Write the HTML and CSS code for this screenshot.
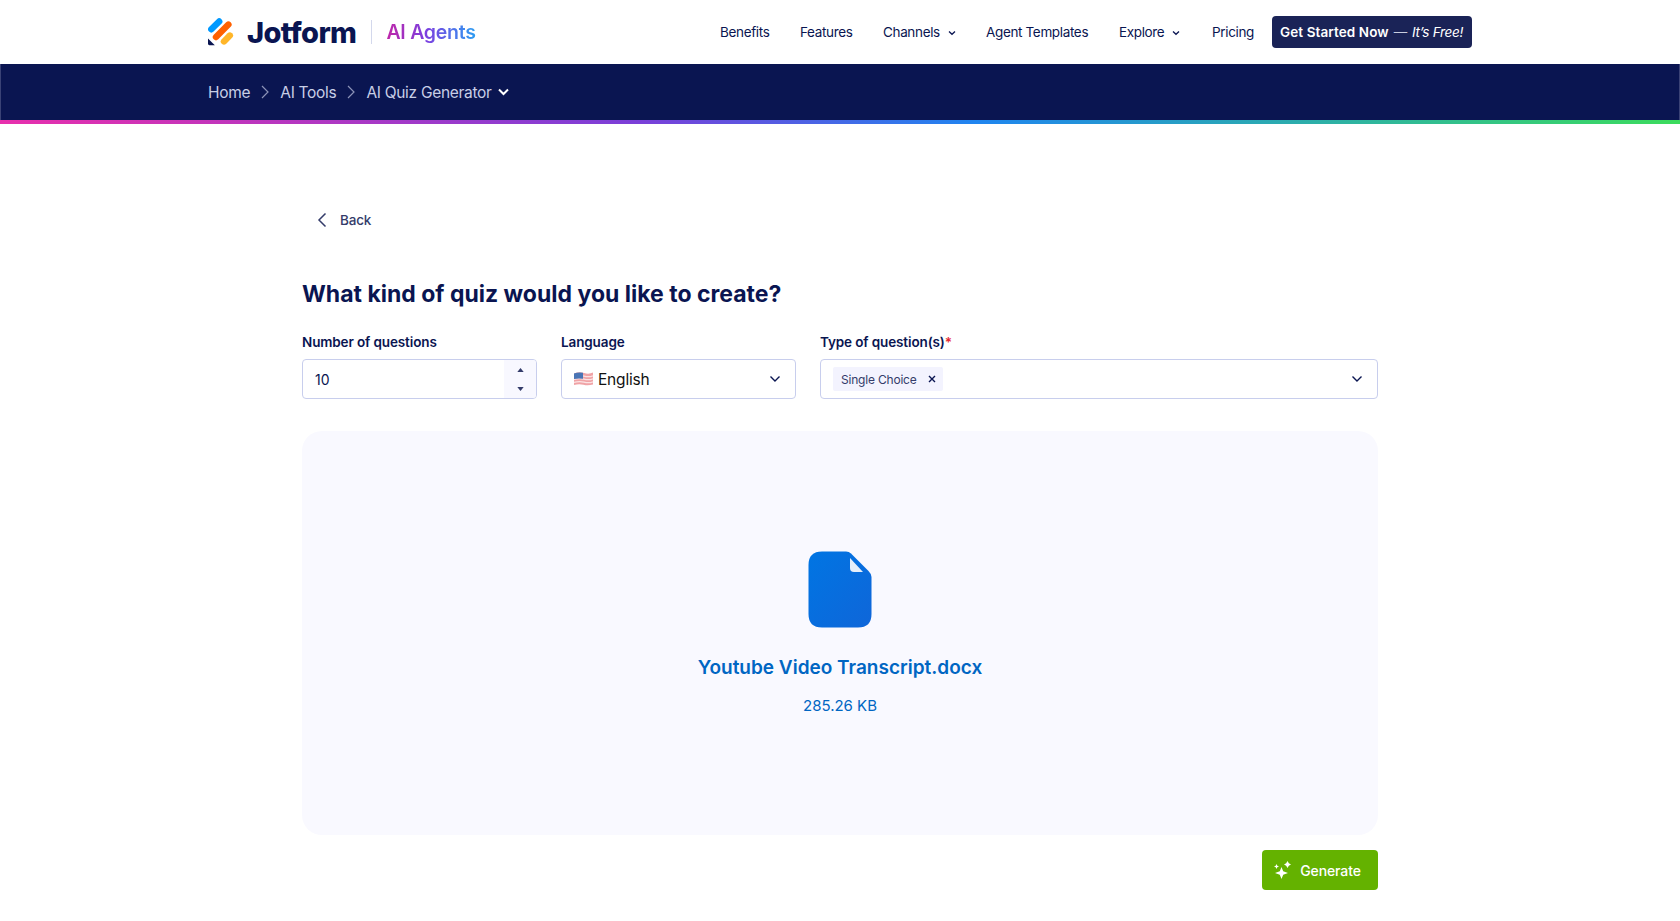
FILE: index.html
```html
<!DOCTYPE html>
<html lang="en">
<head>
<meta charset="utf-8">
<title>AI Quiz Generator</title>
<link rel="stylesheet" href="styles.css">
</head>
<body>
<header class="topbar">
  <div class="wrap topbar-inner">
    <a class="brand">
      <svg class="logo" width="26" height="28" viewBox="0 0 26 28">
        <path d="M3.300 11.300 11.200 3.400" stroke="#0099ff" stroke-width="6.400" stroke-linecap="round"/>
        <path d="M8 19 20.400 6.600" stroke="#ff6100" stroke-width="6.400" stroke-linecap="round"/>
        <path d="M16 23.400 21.800 17.600" stroke="#ffb629" stroke-width="6.400" stroke-linecap="round"/>
        <path d="M0 20.500 6.800 27.200H1.400Q0 27.200 0 25.800Z" fill="#0a1551"/>
      </svg>
      <span class="brand-name">Jotform</span>
      <span class="brand-sep"></span>
      <span class="brand-sub">AI Agents</span>
    </a>
    <nav class="nav">
      <a class="nav-link">Benefits</a>
      <a class="nav-link">Features</a>
      <a class="nav-link">Channels<svg class="nav-caret" width="8" height="6" viewBox="0 0 8 6"><path d="M1 1.500 4 4.300 7 1.500" fill="none" stroke="#0a1551" stroke-width="1.300"/></svg></a>
      <a class="nav-link">Agent Templates</a>
      <a class="nav-link">Explore<svg class="nav-caret" width="8" height="6" viewBox="0 0 8 6"><path d="M1 1.500 4 4.300 7 1.500" fill="none" stroke="#0a1551" stroke-width="1.300"/></svg></a>
      <a class="nav-link nav-last">Pricing</a>
      <a class="cta"><b>Get Started Now</b><span class="cta-dash">—</span><i>It’s Free!</i></a>
    </nav>
  </div>
</header>
<div class="crumbs">
  <div class="wrap crumbs-inner">
    <a>Home</a>
    <svg class="crumb-sep" width="8" height="14" viewBox="0 0 8 14"><path d="M1 1 7 7 1 13" fill="none" stroke="#8c93b8" stroke-width="1.200"/></svg>
    <a>AI Tools</a>
    <svg class="crumb-sep" width="8" height="14" viewBox="0 0 8 14"><path d="M1 1 7 7 1 13" fill="none" stroke="#8c93b8" stroke-width="1.200"/></svg>
    <a>AI Quiz Generator</a>
    <svg class="crumb-caret" width="11" height="8" viewBox="0 0 11 8"><path d="M1 1.500 5.500 6 10 1.500" fill="none" stroke="#fff" stroke-width="2"/></svg>
  </div>
</div>
<div class="rainbow"></div>
<main class="main">
  <a class="back">
    <svg width="10" height="16" viewBox="0 0 10 16"><path d="M8.500 1.500 2 8l6.500 6.500" fill="none" stroke="#343c6a" stroke-width="1.500"/></svg>
    <span>Back</span>
  </a>
  <h1 class="title">What kind of quiz would you like to create?</h1>
  <div class="fields">
    <div class="field">
      <label class="label">Number of questions</label>
      <div class="box number">
        <span class="number-val">10</span>
        <span class="stepper">
          <svg width="7" height="4" viewBox="0 0 8 5"><path d="M4 0 8 5H0Z" fill="#343c6a"/></svg>
          <svg width="7" height="4" viewBox="0 0 8 5"><path d="M4 5 8 0H0Z" fill="#343c6a"/></svg>
        </span>
      </div>
    </div>
    <div class="field">
      <label class="label">Language</label>
      <div class="box select">
        <svg class="flag" width="19" height="14" viewBox="0 0 19 14">
          <path d="M0 1.500Q5 -.500 10 1T19 .500V12.500Q14 14 9.500 12.800T0 13Z" fill="#f0a3a6"/>
          <path d="M0 4.500Q5 3 10 4.200T19 3.800M0 7.500Q5 6 10 7.200T19 6.800M0 10.500Q5 9 10 10.200T19 9.800" fill="none" stroke="#fbe3e4" stroke-width="1.200"/>
          <path d="M0 1.500Q4.500 -.200 9 .800V6.800Q4.500 6 0 7Z" fill="#4a75b5"/>
        </svg>
        <span class="select-val">English</span>
        <svg class="chev" width="12" height="8" viewBox="0 0 12 8"><path d="M1.500 1.500 6 6l4.500-4.500" fill="none" stroke="#0a1551" stroke-width="1.400"/></svg>
      </div>
    </div>
    <div class="field field-wide">
      <label class="label">Type of question(s)<span class="req">*</span></label>
      <div class="box select">
        <span class="tag">Single Choice
          <svg width="8" height="8" viewBox="0 0 8 8"><path d="M1 1l6 6M7 1 1 7" stroke="#0a1551" stroke-width="1.400"/></svg>
        </span>
        <svg class="chev" width="12" height="8" viewBox="0 0 12 8"><path d="M1.500 1.500 6 6l4.500-4.500" fill="none" stroke="#0a1551" stroke-width="1.400"/></svg>
      </div>
    </div>
  </div>
  <section class="panel">
    <svg class="doc" width="64" height="77" viewBox="0 0 64 77">
      <defs><linearGradient id="docg" x1="0" y1="0" x2="1" y2="1"><stop offset="0" stop-color="#0075e3"/><stop offset="1" stop-color="#0f66d9"/></linearGradient></defs>
      <path d="M14 .500H38Q41 .500 43 2.500L60.500 20Q63.500 23 63.500 26V63Q63.500 76.500 50 76.500H14Q.500 76.500 .500 63V14Q.500 .500 14 .500Z" fill="url(#docg)"/>
      <path d="M42 7 55 21H46Q42 21 42 17Z" fill="#e6effa"/>
    </svg>
    <div class="file-name">Youtube Video Transcript.docx</div>
    <div class="file-size">285.26 KB</div>
  </section>
  <div class="actions">
    <button class="generate">
      <svg width="18" height="18" viewBox="0 0 18 18" fill="#fff">
        <path d="M7.500 6 9.200 10.300 14 12 9.200 13.700 7.500 18 5.800 13.700 1 12 5.800 10.300Z"/>
        <path d="M13.500 0 14.800 2.200 17 3.500 14.800 4.800 13.500 7 12.200 4.800 10 3.500 12.200 2.200Z"/>
        <path d="M2.500 3 3.300 4.700 5 5.500 3.300 6.300 2.500 8 1.700 6.300 0 5.500 1.700 4.700Z"/>
      </svg>
      Generate
    </button>
  </div>
</main>
</body>
</html>
```
FILE: styles.css
```css
* { box-sizing: border-box; }
html, body { margin: 0; height: 100%; }
body { background: #fff; color: #0a1551; font-family: Inter, "Liberation Sans", sans-serif; overflow: hidden; }
.wrap { width: 1264px; margin: 0 auto; }
.topbar { height: 64px; background: #fff; }
.topbar-inner { height: 64px; display: flex; align-items: center; justify-content: space-between; }
.brand { display: flex; align-items: center; }
.logo { display: block; margin-right: 13px; }
.brand-name { font-size: 29px; font-weight: 800; letter-spacing: -0.6px; color: #0a1551; }
.brand-sep { width: 1px; height: 24px; background: #d3d8ec; margin: 0 14px 0 15px; }
.brand-sub { font-size: 19.500px; font-weight: 600; letter-spacing: -0.25px; background: linear-gradient(90deg, #c026a8, #7b3fe0 45%, #2b9df2); -webkit-background-clip: text; background-clip: text; color: transparent; }
.nav { display: flex; align-items: center; }
.nav-link { font-size: 13.500px; letter-spacing: -0.35px; width: 80px; color: #0a1551; white-space: nowrap; }
.nav-link:nth-child(2) { width: 83px; }
.nav-link:nth-child(3) { width: 103px; }
.nav-link:nth-child(4) { width: 133px; }
.nav-link:nth-child(5) { width: 93px; }
.nav-last { width: 60px; }
.nav-caret { margin-left: 8px; vertical-align: 1px; }
.cta { height: 32px; width: 200px; padding: 0 8px; border-radius: 4px; background: #1a2357; color: #fff; display: flex; align-items: center; gap: 5px; font-size: 13.500px; letter-spacing: -0.3px; white-space: nowrap; }
.cta b { font-weight: 600; letter-spacing: 0.1px; }
.cta-dash { color: #c8cee0; }
.crumbs { height: 56px; background: #0a1551; border-left: 1px solid #3a4275; border-right: 1px solid #3a4275; }
.crumbs-inner { height: 56px; display: flex; align-items: center; color: #c8cee6; font-size: 15.500px; letter-spacing: -0.3px; }
.crumb-sep { margin: 0 11px; }
.crumb-caret { margin-left: 6px; }
.rainbow { height: 4px; background: linear-gradient(90deg, #e82fac 0%, #7a3fd8 38%, #1f85f0 58%, #3cdc5c 100%); }
.main { width: 1076px; margin: 0 auto; padding-top: 88px; }
.back { display: flex; align-items: center; gap: 13px; margin-left: 15px; height: 16px; font-size: 13.500px; letter-spacing: -0.2px; color: #343c6a; font-weight: 500; }
.title { margin: 50px 0 0; font-size: 23px; line-height: 32px; font-weight: 700; color: #0a1551; }
.fields { display: flex; gap: 24px; margin-top: 23px; }
.field { width: 235px; flex: none; }
.field-wide { width: 558px; }
.label { display: block; font-size: 13.500px; line-height: 18px; font-weight: 600; letter-spacing: -0.12px; margin-bottom: 8px; }
.req { color: #e5262e; }
.box { height: 40px; border: 1px solid #c8ceed; border-radius: 4px; background: #fff; display: flex; align-items: center; }
.number { padding-left: 12px; overflow: hidden; }
.number-val { flex: 1; font-size: 14px; }
.stepper { width: 32px; height: 100%; background: #f8f8ff; display: flex; flex-direction: column; align-items: center; justify-content: center; gap: 15px; }
.stepper svg { display: block; }
.select { padding: 0 14px 0 12px; }
.flag { margin-right: 5px; }
.select-val { flex: 1; font-size: 15.500px; letter-spacing: -0.2px; color: #111; }
.tag { height: 24px; padding: 0 7px 0 8px; background: #f3f3fe; border-radius: 2px; display: flex; align-items: center; gap: 11px; font-size: 12px; letter-spacing: -0.2px; color: #343c6a; }
.chev { margin-left: auto; }
.panel { height: 404px; margin-top: 32px; background: #f9f9ff; border-radius: 20px; display: flex; flex-direction: column; align-items: center; padding-top: 120px; }
.doc { display: block; }
.file-name { margin-top: 27px; font-size: 19px; line-height: 26px; font-weight: 600; color: #0066c3; }
.file-size { margin-top: 13px; font-size: 15px; line-height: 24px; color: #0066c3; }
.actions { display: flex; justify-content: flex-end; margin-top: 15px; }
.generate { width: 116px; height: 40px; border: 0; border-radius: 4px; background: #64b200; color: #fff; font: 500 14px Inter, sans-serif; letter-spacing: -0.1px; display: flex; align-items: center; justify-content: center; gap: 8px; padding: 0 5px 0 0; }
```
